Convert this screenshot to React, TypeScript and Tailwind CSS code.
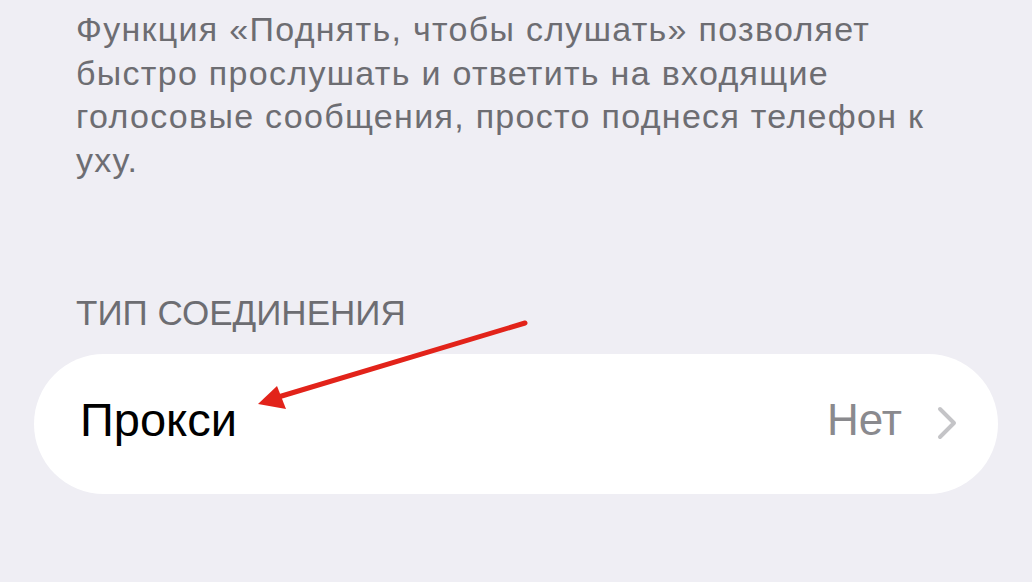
import React from 'react';

const font = { fontFamily: '"Liberation Sans", Arial, sans-serif' };

export default function App() {
  return (
    <div className="relative h-[582px] w-[1032px] overflow-hidden bg-[#efeef4] text-[#6d6d72]" style={font}>
      {/* footer note of the previous section */}
      <p className="w-[945px] pl-[76px] pt-[8px] text-[34px] leading-[43.5px] tracking-[1.3px]">
        Функция «Поднять, чтобы слушать» позволяет быстро прослушать и ответить на входящие голосовые сообщения,
        просто поднеся телефон к уху.
      </p>

      <div className="mt-[111px] pl-[76px] text-[35px] uppercase leading-[40px]">Тип соединения</div>

      {/* settings row */}
      <div className="mx-[34px] mt-[21px] flex h-[140px] items-center rounded-full bg-white pb-[8px] pl-[46px] pr-[40px]">
        <span className="flex-1 text-[47px] text-black">Прокси</span>
        <span className="text-[44px] text-[#8a8a8e]">Нет</span>
        <svg className="ml-[34px] mt-[6px] h-[34px] w-[22px]" viewBox="0 0 22 34" fill="none">
          <path d="M4 3l14 14L4 31" stroke="#c4c4c7" strokeWidth="4" strokeLinecap="round" strokeLinejoin="round" />
        </svg>
      </div>

      {/* annotation arrow */}
      <svg className="pointer-events-none absolute left-0 top-0" width="1032" height="582" viewBox="0 0 1032 582">
        <line x1="525" y1="323" x2="275" y2="398" stroke="#e2231a" strokeWidth="5" strokeLinecap="round" />
        <polygon points="258,404 277,386 286,409" fill="#e2231a" />
      </svg>
    </div>
  );
}
